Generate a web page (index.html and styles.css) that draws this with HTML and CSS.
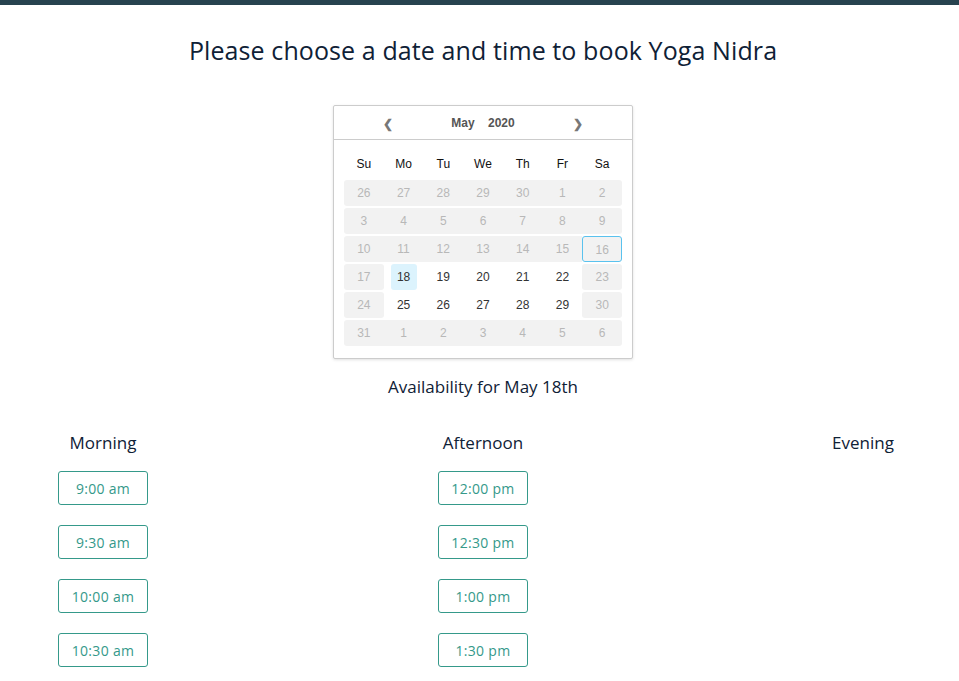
FILE: index.html
```html
<!DOCTYPE html>
<html>
<head>
<meta charset="utf-8">
<link rel="stylesheet" href="styles.css">
</head>
<body>
<div class="topbar"></div>
<main class="page">
  <h1 class="title">Please choose a date and time to book Yoga Nidra</h1>
  <div class="calendar">
    <div class="cal-head">
      <span class="nav">&#x276E;</span>
      <span class="month">May&nbsp;&nbsp;&nbsp;&nbsp;2020</span>
      <span class="nav">&#x276F;</span>
    </div>
    <div class="cal-body">
      <div class="grid dow">
        <span>Su</span><span>Mo</span><span>Tu</span><span>We</span><span>Th</span><span>Fr</span><span>Sa</span>
      </div>
      <div class="grid days">
        <span class="off first">26</span><span class="off">27</span><span class="off">28</span><span class="off">29</span><span class="off">30</span><span class="off">1</span><span class="off last">2</span>
        <span class="off first">3</span><span class="off">4</span><span class="off">5</span><span class="off">6</span><span class="off">7</span><span class="off">8</span><span class="off last">9</span>
        <span class="off first">10</span><span class="off">11</span><span class="off">12</span><span class="off">13</span><span class="off">14</span><span class="off">15</span><span class="off last today">16</span>
        <span class="off first last">17</span><span class="sel"><b>18</b></span><span>19</span><span>20</span><span>21</span><span>22</span><span class="off first last">23</span>
        <span class="off first last">24</span><span>25</span><span>26</span><span>27</span><span>28</span><span>29</span><span class="off first last">30</span>
        <span class="off first">31</span><span class="off">1</span><span class="off">2</span><span class="off">3</span><span class="off">4</span><span class="off">5</span><span class="off last">6</span>
      </div>
    </div>
  </div>
  <h2 class="avail">Availability for May 18th</h2>
  <div class="slots">
    <div class="col">
      <h3 class="col-title">Morning</h3>
      <button class="slot">9:00 am</button>
      <button class="slot">9:30 am</button>
      <button class="slot">10:00 am</button>
      <button class="slot">10:30 am</button>
    </div>
    <div class="col">
      <h3 class="col-title">Afternoon</h3>
      <button class="slot">12:00 pm</button>
      <button class="slot">12:30 pm</button>
      <button class="slot">1:00 pm</button>
      <button class="slot">1:30 pm</button>
    </div>
    <div class="col">
      <h3 class="col-title">Evening</h3>
    </div>
  </div>
</main>
</body>
</html>
```
FILE: styles.css
```css
* { box-sizing: border-box; }
html, body { margin: 0; padding: 0; background: #fff; }
body { font-family: "Open Sans", "Liberation Sans", sans-serif; color: #0f2136; overflow: hidden; }
.topbar { height: 5px; background: #27434f; }
.page { padding-left: 7px; display: flex; flex-direction: column; align-items: center; }
.title {
  margin: 28px 0 0;
  font-size: 25px;
  font-weight: 400;
  line-height: 34px;
  color: #0f2136;
  letter-spacing: 0.1px;
}
.calendar {
  margin-top: 38px;
  width: 300px;
  border: 1px solid #ccc;
  border-radius: 2px;
  box-shadow: 0 1px 3px rgba(0,0,0,0.12);
  font-family: "Liberation Sans", Arial, sans-serif;
  background: #fff;
}
.cal-head {
  height: 34px;
  border-bottom: 1px solid #ccc;
  display: flex;
  align-items: center;
  justify-content: center;
}
.nav { color: #777; font-size: 12px; font-weight: 700; width: 70px; text-align: center; padding-top: 3px; }
.month { color: #555; font-size: 12px; font-weight: 700; width: 120px; text-align: center; }
.cal-body { padding: 15px 10px 12px; }
.grid { display: grid; grid-template-columns: repeat(7, 1fr); }
.dow span { text-align: center; font-size: 12px; color: #111; height: 18px; line-height: 18px; }
.dow { margin-bottom: 7px; }
.days { row-gap: 2px; }
.days span {
  height: 26px;
  display: flex;
  align-items: center;
  justify-content: center;
  font-size: 12px;
  color: #333;
}
.days span.off { background: #f2f2f2; color: #b8b8b8; }
.days span.first { border-radius: 3px 0 0 3px; }
.days span.last { border-radius: 0 3px 3px 0; }
.days span.first.last { border-radius: 3px; }
.days span.today { border: 1px solid #5ac2ee; border-radius: 3px; padding-top: 2px; }
.days span.sel b {
  font-weight: 400;
  background: #dcf3fd;
  border-radius: 3px;
  width: 26px;
  height: 26px;
  display: flex;
  align-items: center;
  justify-content: center;
}
.avail {
  margin: 15px 0 0;
  font-size: 17px;
  font-weight: 400;
  line-height: 26px;
  color: #0f2136;
}
.slots {
  margin-top: 31px;
  width: 850px;
  display: flex;
  justify-content: space-between;
}
.col { width: 90px; display: flex; flex-direction: column; align-items: center; }
.col-title {
  margin: 0;
  font-size: 17px;
  font-weight: 400;
  line-height: 24px;
  white-space: nowrap;
  color: #0f2136;
}
.slot {
  margin-top: 20px;
  width: 90px;
  height: 34px;
  border: 1px solid #35998a;
  border-radius: 3px;
  background: #fff;
  color: #35998a;
  font-family: "Open Sans", sans-serif;
  font-size: 14px;
  letter-spacing: 0.3px;
  padding: 0;
}
.col-title + .slot { margin-top: 16px; }
```
